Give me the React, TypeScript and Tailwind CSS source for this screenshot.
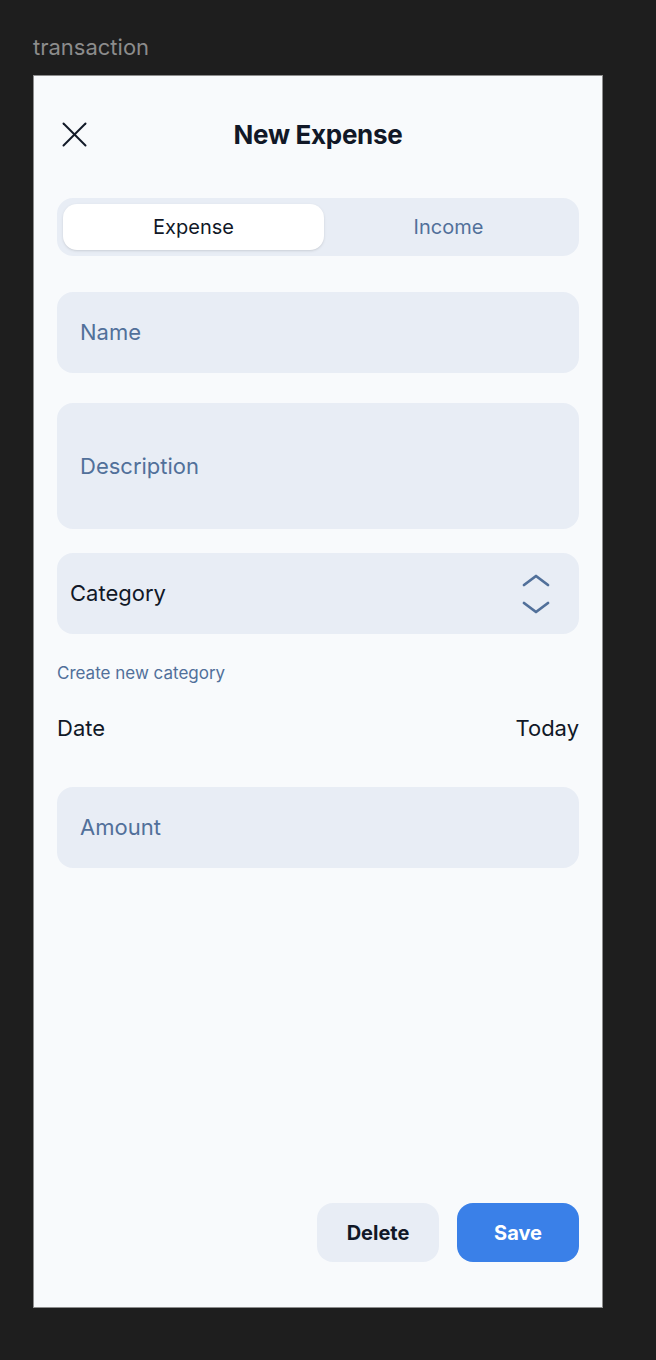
const font = { fontFamily: 'Inter, "Liberation Sans", sans-serif' }
const fieldCls = 'w-full rounded-2xl bg-[#e8edf5] px-[23px] text-[22px] text-[#51709a] flex items-center'

function Chevrons() {
  return (
    <svg width="28" height="40" viewBox="0 0 28 40" fill="none" stroke="#51709a" strokeWidth="2.8" strokeLinecap="round" strokeLinejoin="round">
      <path d="M2 11 L14 2 L26 11" />
      <path d="M2 29 L14 38 L26 29" />
    </svg>
  )
}

function CloseIcon() {
  return (
    <svg width="25" height="25" viewBox="0 0 25 25" fill="none" stroke="#111827" strokeWidth="2" strokeLinecap="round">
      <path d="M1.5 1.5 L23.5 23.5" />
      <path d="M23.5 1.5 L1.5 23.5" />
    </svg>
  )
}

export default function App() {
  return (
    <div className="min-h-[1360px] w-[656px] bg-[#1e1e1e] pt-[33px] pl-[33px]" style={font}>
      <div className="text-[22px] leading-[29px] text-[#8c8c8c] mb-[13px]">transaction</div>
      <div className="w-[570px] h-[1233px] bg-[#f8fafc] border border-[#8d8d8d] flex flex-col px-[23px] pt-[46px] pb-[45px]">
        <div className="relative flex items-center justify-center h-[24px]">
          <div className="absolute left-[5px] top-0">
            <CloseIcon />
          </div>
          <h1 className="text-[26px] font-bold text-[#111827] tracking-[-0.3px]">New Expense</h1>
        </div>

        <div className="mt-[52px] h-[58px] rounded-2xl bg-[#e8edf5] p-[6px] flex">
          <button className="w-[261px] rounded-[14px] bg-white shadow-sm text-[20px] text-[#111827]">Expense</button>
          <button className="flex-1 text-[20px] text-[#51709a]">Income</button>
        </div>

        <div className={`${fieldCls} h-[81px] mt-[36px]`}>Name</div>
        <div className={`${fieldCls} h-[126px] mt-[30px]`}>Description</div>
        <div className={`${fieldCls} h-[81px] mt-[24px] justify-between pl-[13px] pr-[29px]`}>
          <span className="text-[#111827]">Category</span>
          <Chevrons />
        </div>

        <div className="mt-[27px] text-[17px] text-[#51709a]">Create new category</div>
        <div className="mt-[25px] flex justify-between text-[22px] text-[#111827]">
          <span>Date</span>
          <span>Today</span>
        </div>

        <div className={`${fieldCls} h-[81px] mt-[42px]`}>Amount</div>

        <div className="mt-auto flex justify-end gap-[18px]">
          <button className="w-[122px] h-[59px] rounded-2xl bg-[#e8edf5] text-[20px] font-bold text-[#111827]">Delete</button>
          <button className="w-[122px] h-[59px] rounded-2xl bg-[#3a80e8] text-[20px] font-bold text-white">Save</button>
        </div>
      </div>
    </div>
  )
}
